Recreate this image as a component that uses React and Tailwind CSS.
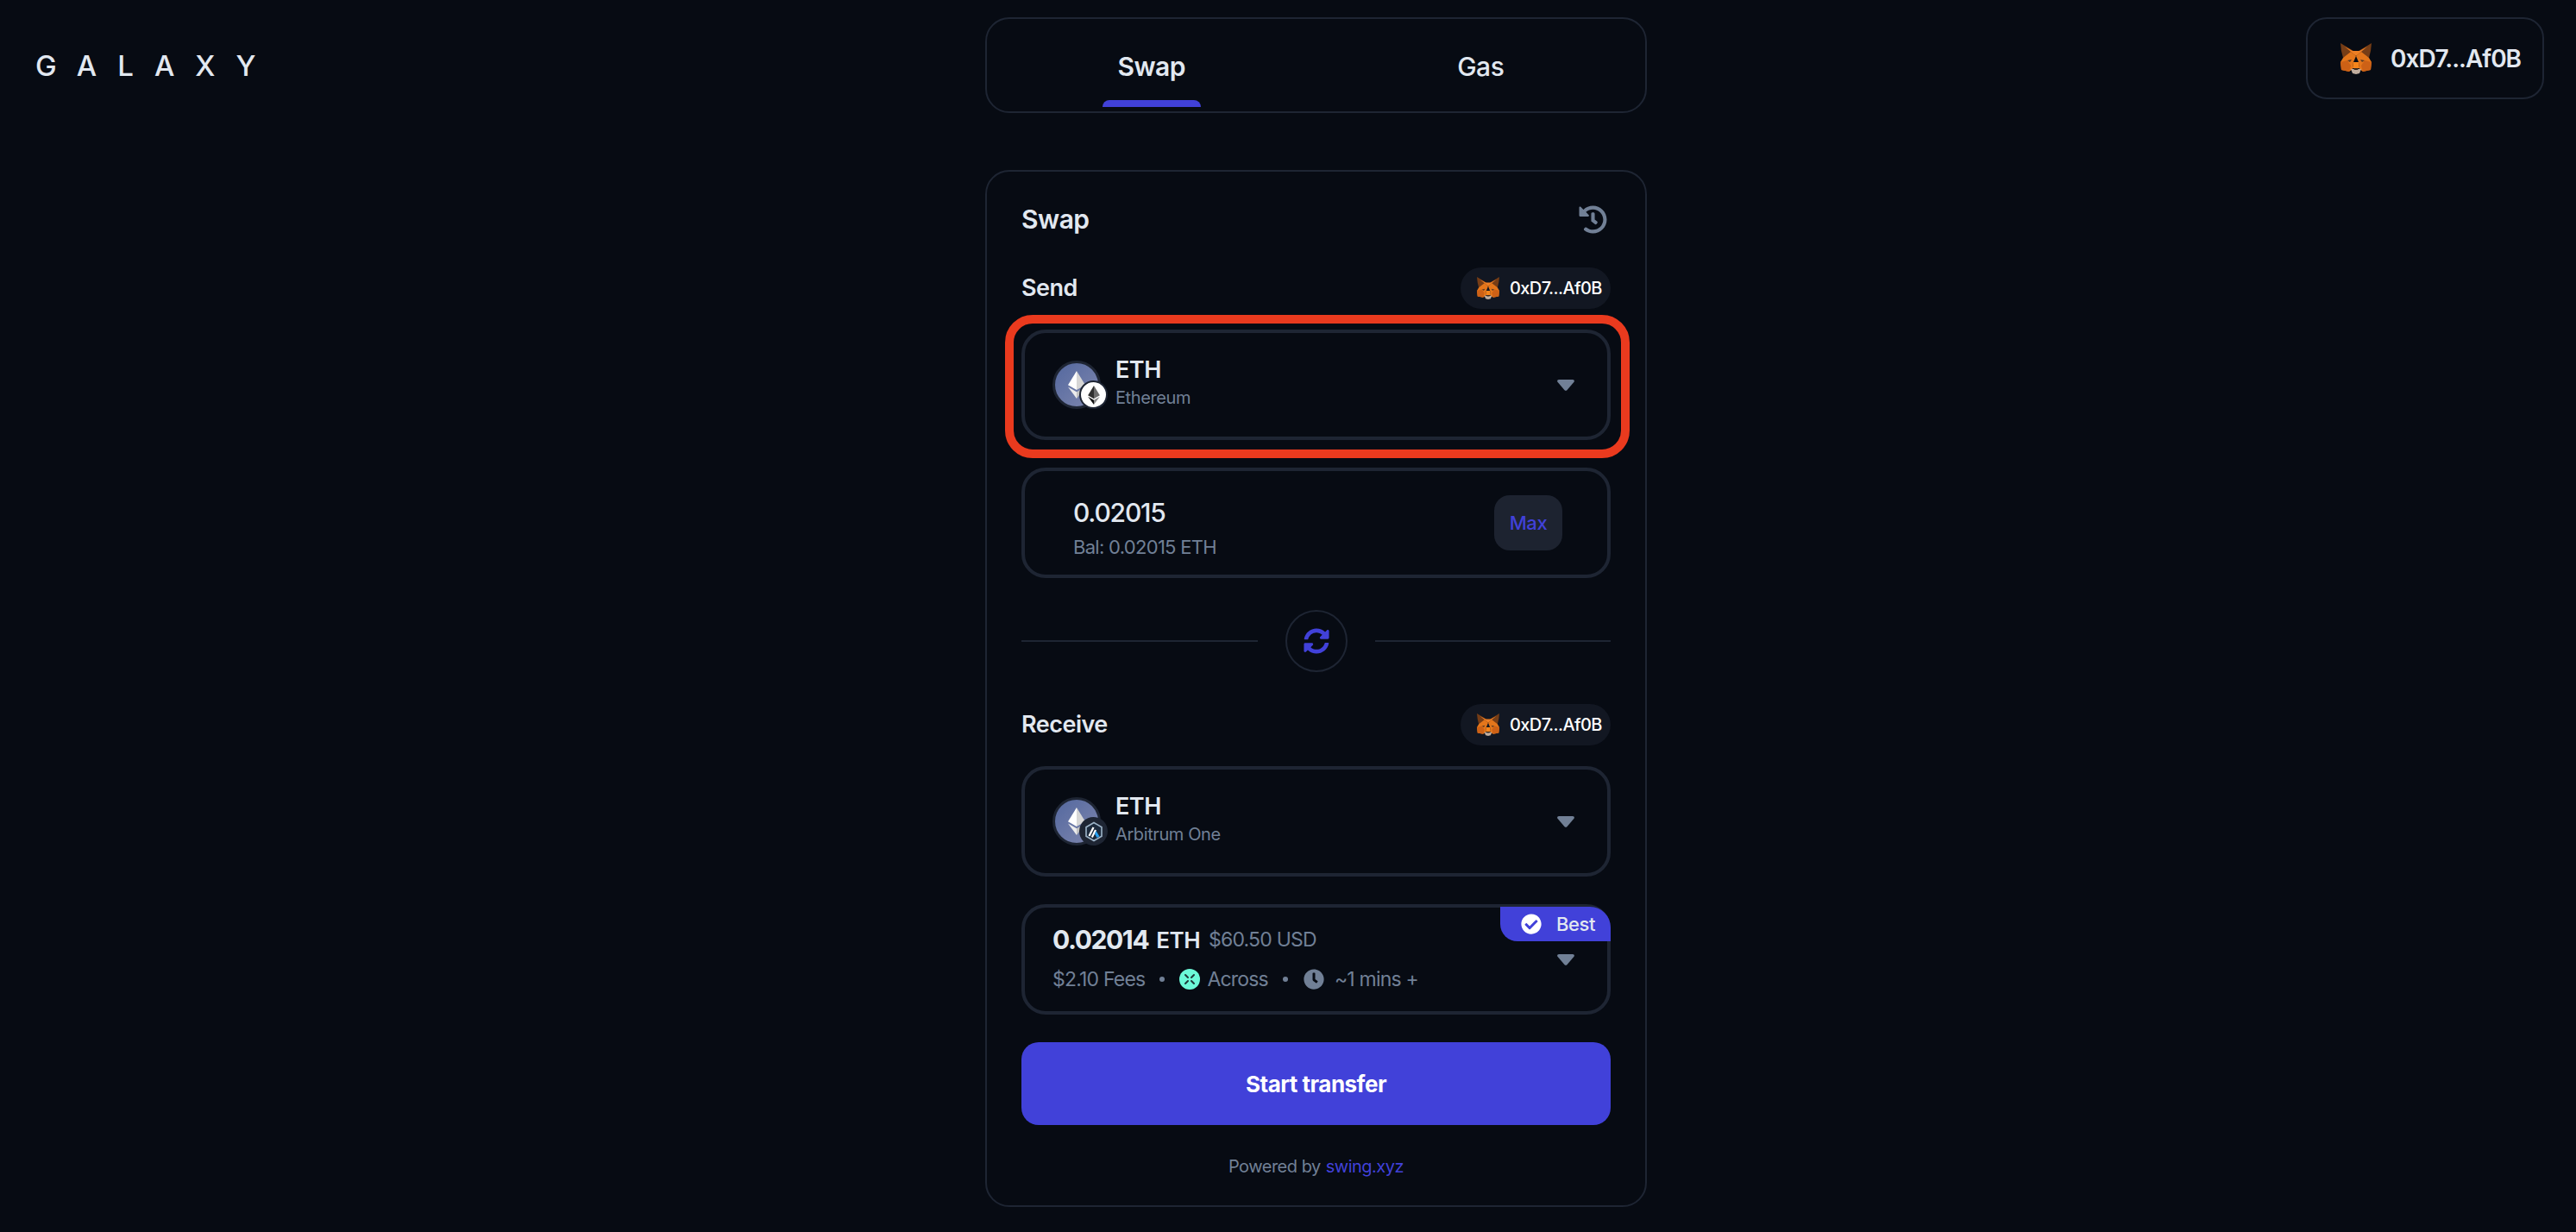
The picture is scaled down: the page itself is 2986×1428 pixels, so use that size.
import React from "react";
import { FaHistory, FaSyncAlt, FaClock, FaCheckCircle } from "react-icons/fa";

function Fox({ className }) {
  return (
    <svg viewBox="0 0 36 36" className={className}>
      <polygon points="0,0 15,9 17,14 3,17 1,9" fill="#763d16" />
      <polygon points="36,0 21,9 19,14 33,17 35,9" fill="#763d16" />
      <polygon points="2,1 15,9 21,9 34,1 33,17 36,22 35,31 26,33 22,36 14,36 10,33 1,31 0,22 3,17" fill="#e2761b" fillOpacity="0" />
      <polygon points="5,4 14,9 22,9 31,4 18,15" fill="#ee7f24" />
      <polygon points="18,15 12,10 3,17 0,22 1,31 10,33 14,30 15,22" fill="#e4761b" />
      <polygon points="18,15 24,10 33,17 36,22 35,31 26,33 22,30 21,22" fill="#e4761b" />
      <polygon points="0,22 8,20 12,26 10,33 1,31" fill="#cd6116" />
      <polygon points="36,22 28,20 24,26 26,33 35,31" fill="#cd6116" />
      <polygon points="8,20 13,19 11,22" fill="#5a3a24" />
      <polygon points="28,20 23,19 25,22" fill="#5a3a24" />
      <polygon points="12,30 24,30 22,35 18,36 14,35" fill="#c0ad9e" />
      <polygon points="15,29 21,29 20,31 16,31" fill="#3a2a20" />
      <polygon points="15,22 21,22 22,29 14,29" fill="#f6851b" />
    </svg>
  );
}

function Ether({ className, dark }) {
  const a = dark ? "#2f2f2f" : "#ffffff";
  const b = dark ? "#6b6b6b" : "#d6d6d6";
  const c = dark ? "#111111" : "#ececec";
  const d = dark ? "#8a8a8a" : "#c4c4c4";
  return (
    <svg viewBox="0 0 20 32" className={className}>
      <polygon points="10,0 0,16.3 10,22" fill={a} />
      <polygon points="10,0 20,16.3 10,22" fill={b} />
      <polygon points="0,18.4 10,32 10,24.2" fill={c} />
      <polygon points="20,18.4 10,32 10,24.2" fill={d} />
    </svg>
  );
}

function Arbitrum({ className }) {
  return (
    <svg viewBox="0 0 24 24" className={className}>
      <polygon points="12,1.5 21,6.7 21,17.3 12,22.5 3,17.3 3,6.7" fill="#1c2a3c" stroke="#9db4c8" strokeWidth="1.6" />
      <path d="M6.5 17 L11.5 7" stroke="#ffffff" strokeWidth="2.2" fill="none" />
      <path d="M9.8 18.5 L14 10" stroke="#ffffff" strokeWidth="2.2" fill="none" />
      <path d="M14.5 11 L18.5 17.5 L15.5 19 L13 14.5 Z" fill="#28a0f0" />
    </svg>
  );
}

function Across({ className }) {
  return (
    <svg viewBox="0 0 24 24" className={className}>
      <circle cx="12" cy="12" r="12" fill="#6cf9d8" />
      <path d="M7 7 L10 10 M17 7 L14 10 M7 17 L10 14 M17 17 L14 14" stroke="#1f3a3a" strokeWidth="2" strokeLinecap="round" />
    </svg>
  );
}

function Caret() {
  return (
    <svg viewBox="0 0 20 13" className="w-[20px] h-[13px] shrink-0">
      <path d="M2 0 H18 C19.6 0 20.4 1.6 19.5 2.8 L11.4 12.2 C10.7 13 9.3 13 8.6 12.2 L0.5 2.8 C-0.4 1.6 0.4 0 2 0 Z" fill="#718096" />
    </svg>
  );
}

function TokenIcon({ network }) {
  return (
    <div className="relative w-[56px] h-[56px] shrink-0">
      <div className="w-[56px] h-[56px] rounded-full border-[3px] border-[#1e2533] bg-gradient-to-br from-[#54689f] to-[#7e86ad] flex items-center justify-center">
        <Ether className="w-[20px] h-[34px]" />
      </div>
      {network === "eth" ? (
        <div className="absolute left-[31px] top-[23px] w-[33px] h-[33px] rounded-full bg-white border-[2px] border-[#1e2533] flex items-center justify-center">
          <Ether dark className="w-[14px] h-[22px]" />
        </div>
      ) : (
        <div className="absolute left-[31px] top-[23px] w-[33px] h-[33px] rounded-full bg-[#1e2533] flex items-center justify-center">
          <Arbitrum className="w-[24px] h-[24px]" />
        </div>
      )}
    </div>
  );
}

function TokenSelect({ network, name }) {
  return (
    <div className="h-[128px] rounded-[28px] border-[4px] border-[#1e2533] flex items-center justify-between pl-[32px] pr-[38px]">
      <div className="flex items-center gap-[17px]">
        <TokenIcon network={network} />
        <div className="flex flex-col mb-[2px]">
          <span className="text-[27px] leading-[32px] font-semibold text-[#e2e8f0] tracking-[-0.5px]">ETH</span>
          <span className="text-[20px] leading-[32px] text-[#718096] tracking-[-0.4px]">{name}</span>
        </div>
      </div>
      <Caret />
    </div>
  );
}

function SectionRow({ label }) {
  return (
    <div className="h-[48px] flex items-center justify-between">
      <span className="text-[27px] font-semibold text-[#e2e8f0] tracking-[-0.5px]">{label}</span>
      <div className="h-[48px] w-[174px] rounded-full bg-[#121722] flex items-center pl-[19px] gap-[12px]">
        <Fox className="w-[26px] h-[26px] shrink-0" />
        <span className="text-[20px] font-medium text-white tracking-[-0.6px] whitespace-nowrap">0xD7...Af0B</span>
      </div>
    </div>
  );
}

export default function App() {
  return (
    <div className="min-h-[1428px] bg-[#070b13] font-['Inter',sans-serif] flex items-start pt-[20px]">
      <div className="w-[1142px] shrink-0 pl-[41px] pt-[36px]">
        <span className="text-[33px] leading-[40px] font-medium text-[#e2e8f0] tracking-[24px] whitespace-nowrap">GALAXY</span>
      </div>

      <div className="w-[767px] shrink-0 flex flex-col">
        <div className="h-[111px] rounded-[28px] border-[2px] border-[#1e2533] grid grid-cols-2">
          <div className="flex flex-col items-center">
            <span className="mt-[35px] text-[30px] leading-[40px] font-semibold text-[#e2e8f0] tracking-[-0.5px]">Swap</span>
            <div className="mt-auto mb-[5px] w-[114px] h-[8px] rounded-t-[8px] bg-[#4141d9]" />
          </div>
          <div className="flex flex-col items-center">
            <span className="mt-[35px] text-[30px] leading-[40px] font-medium text-[#e2e8f0] tracking-[-0.5px]">Gas</span>
          </div>
        </div>

        <div className="mt-[66px] rounded-[28px] border-[2px] border-[#1e2533] px-[40px] pt-[31px] pb-[31px] flex flex-col">
          <div className="h-[48px] flex items-center justify-between">
            <span className="text-[30px] font-semibold text-[#e2e8f0] tracking-[-0.5px]">Swap</span>
            <FaHistory className="w-[33px] h-[33px] mr-[4px] text-[#718096]" />
          </div>

          <div className="mt-[32px]">
            <SectionRow label="Send" />
          </div>

          <div className="relative mt-[24px]">
            <TokenSelect network="eth" name="Ethereum" />
            <div className="absolute left-[-19px] right-[-22px] top-[-17px] bottom-[-21px] rounded-[32px] border-[10px] border-[#ea3a1e] pointer-events-none" />
          </div>

          <div className="mt-[32px] h-[128px] rounded-[28px] border-[4px] border-[#1e2533] flex items-start justify-between pt-[28px] pl-[56px] pr-[52px]">
            <div className="flex flex-col">
              <span className="text-[30px] leading-[40px] font-medium text-[#e2e8f0] tracking-[-1.2px]">0.02015</span>
              <span className="text-[22px] leading-[40px] text-[#718096] tracking-[-0.7px]">Bal: 0.02015 ETH</span>
            </div>
            <div className="w-[79px] h-[64px] rounded-[18px] bg-[#1d2330] flex items-center justify-center">
              <span className="text-[22px] font-medium text-[#4141d9] tracking-[-0.4px]">Max</span>
            </div>
          </div>

          <div className="mt-[37px] flex items-center">
            <div className="flex-1 h-[2px] bg-[#1e2533]" />
            <div className="mx-[32px] w-[72px] h-[72px] rounded-full border-[2px] border-[#1e2533] flex items-center justify-center">
              <FaSyncAlt className="w-[30px] h-[30px] text-[#4141d9]" />
            </div>
            <div className="flex-1 h-[2px] bg-[#1e2533]" />
          </div>

          <div className="mt-[37px]">
            <SectionRow label="Receive" />
          </div>

          <div className="mt-[24px]">
            <TokenSelect network="arb" name="Arbitrum One" />
          </div>

          <div className="relative mt-[32px] h-[128px] rounded-[28px] border-[4px] border-[#1e2533] flex items-center justify-between pl-[32px] pr-[38px]">
            <div className="flex flex-col">
              <div className="h-[40px] flex items-center">
                <span className="text-[30px] font-bold text-[#e2e8f0] tracking-[-1.4px]">0.02014</span>
                <span className="ml-[9px] text-[26px] font-semibold text-[#e2e8f0] tracking-[-0.5px]">ETH</span>
                <span className="ml-[10px] text-[23px] text-[#718096] tracking-[-0.8px]">$60.50 USD</span>
              </div>
              <div className="mt-[6px] h-[40px] flex items-center text-[23px] text-[#718096] tracking-[-0.8px]">
                <span>$2.10 Fees</span>
                <span className="ml-[17px] w-[6px] h-[6px] rounded-full bg-[#718096]" />
                <Across className="ml-[17px] w-[24px] h-[24px]" />
                <span className="ml-[8px]">Across</span>
                <span className="ml-[17px] w-[6px] h-[6px] rounded-full bg-[#718096]" />
                <FaClock className="ml-[18px] w-[24px] h-[24px]" />
                <span className="ml-[12px]">~1 mins +</span>
              </div>
            </div>
            <Caret />
            <div className="absolute right-[-4px] top-[-1px] w-[128px] h-[40px] rounded-bl-[20px] rounded-tr-[24px] bg-[#4141d9] flex items-center pl-[24px] gap-[17px]">
              <FaCheckCircle className="w-[24px] h-[24px] text-white" />
              <span className="text-[22px] font-medium text-[#e2e8f0] tracking-[-0.4px]">Best</span>
            </div>
          </div>

          <div className="mt-[32px] h-[96px] rounded-[20px] bg-[#4141d9] flex items-center justify-center">
            <span className="text-[26px] font-bold text-white tracking-[-0.5px]">Start transfer</span>
          </div>

          <div className="mt-[34px] h-[28px] flex items-center justify-center text-[20px] tracking-[-0.5px]">
            <span className="text-[#718096]">Powered by</span>
            <span className="ml-[6px] text-[#4141d9]">swing.xyz</span>
          </div>
        </div>
      </div>

      <div className="flex-1 flex justify-end pr-[37px]">
        <div className="w-[276px] h-[95px] rounded-[24px] border-[2px] border-[#1e2533] flex items-center pl-[38px] gap-[22px]">
          <Fox className="w-[36px] h-[36px] shrink-0" />
          <span className="text-[28px] font-semibold text-[#e2e8f0] tracking-[-1px] whitespace-nowrap">0xD7...Af0B</span>
        </div>
      </div>
    </div>
  );
}
